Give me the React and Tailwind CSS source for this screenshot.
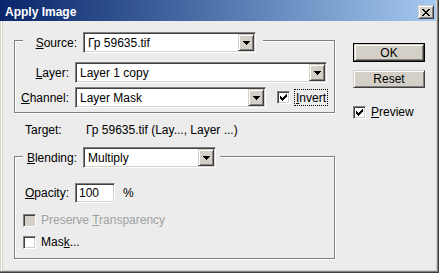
import React from "react";

function Px({ w, h, rects, color = "#000" }) {
  return (
    <svg width={w} height={h} viewBox={`0 0 ${w} ${h}`} shapeRendering="crispEdges">
      {rects.map(([x, y, rw], i) => (
        <rect key={i} x={x} y={y} width={rw} height={1} fill={color} />
      ))}
    </svg>
  );
}

const ARROW = [[0, 0, 7], [1, 1, 5], [2, 2, 3], [3, 3, 1]];
const CHECK = [[6, 0, 1], [5, 1, 2], [0, 2, 1], [4, 2, 3], [0, 3, 2], [3, 3, 3], [0, 4, 5], [1, 5, 3], [2, 6, 1]];
const XMARK = [[0, 0, 2], [6, 0, 2], [1, 1, 2], [5, 1, 2], [2, 2, 4], [3, 3, 2], [2, 4, 4], [1, 5, 2], [5, 5, 2], [0, 6, 2], [6, 6, 2]];

function Raised({ className = "", children }) {
  return (
    <div className={"flex items-center justify-center bg-[#d4d0c8] border border-t-[#d4d0c8] border-l-[#d4d0c8] border-r-[#404040] border-b-[#404040] shadow-[inset_1px_1px_0_#fff,inset_-1px_-1px_0_#808080] " + className}>
      {children}
    </div>
  );
}

function Dropdown({ width, value }) {
  return (
    <div
      className="flex h-[21px] p-[1px] bg-white border border-t-[#808080] border-l-[#808080] border-r-white border-b-white shadow-[inset_1px_1px_0_#404040,inset_-1px_-1px_0_#d4d0c8]"
      style={{ width }}
    >
      <div className="flex-1 flex items-center pl-[3px] whitespace-nowrap overflow-hidden">{value}</div>
      <Raised className="w-[16px] h-full">
        <Px w={7} h={4} rects={ARROW} />
      </Raised>
    </div>
  );
}

function Check({ checked, disabled }) {
  return (
    <span
      className={
        "flex shrink-0 w-[13px] h-[13px] items-center justify-center border border-t-[#808080] border-l-[#808080] border-r-white border-b-white shadow-[inset_1px_1px_0_#404040,inset_-1px_-1px_0_#d4d0c8] " +
        (disabled ? "bg-[#d4d0c8]" : "bg-white")
      }
    >
      {checked && <Px w={7} h={7} rects={CHECK} />}
    </span>
  );
}

export default function App() {
  return (
    <div className="w-[439px] h-[273px] overflow-hidden bg-[#d4d0c8] flex flex-col font-['Liberation_Sans',Arial,sans-serif] text-[12px] leading-[14px] text-black shadow-[inset_-1px_-1px_0_#404040,inset_-2px_-2px_0_#808080,inset_1px_0_0_#d4d0c8,inset_2px_0_0_#fff]">
      {/* Title bar */}
      <div className="w-[436px] h-[21px] shrink-0 flex items-start bg-linear-to-r from-[#0a246a] to-[#a6caf0] pl-[5px] pr-[2px]">
        <span className="flex-1 mt-[5px] text-white font-bold">Apply Image</span>
        <Raised className="mt-[5px] w-[16px] h-[14px]">
          <Px w={8} h={7} rects={XMARK} />
        </Raised>
      </div>

      {/* Body */}
      <div className="ml-[3px] w-[433px] h-[249px] bg-[#ececec] flex">
        {/* Left column */}
        <div className="w-[333px] pl-[11px] pt-[19px] flex flex-col">
          {/* Group 1 */}
          <div className="w-[321px] flex flex-col border border-[#808080] shadow-[1px_1px_0_#fff,inset_1px_1px_0_#fff] pb-[4px]">
            <div className="-mt-[9px] ml-[8px] w-fit flex items-center bg-[#ececec] pr-[7px]">
              <span className="w-[54px] text-right"><u>S</u>ource:</span>
              <div className="ml-[6px]"><Dropdown width={173} value="Гр 59635.tif" /></div>
            </div>
            <div className="mt-[9px] flex items-center">
              <span className="w-[54px] text-right"><u>L</u>ayer:</span>
              <div className="ml-[6px]"><Dropdown width={252} value="Layer 1 copy" /></div>
            </div>
            <div className="mt-[4px] flex items-center">
              <span className="w-[54px] text-right"><u>C</u>hannel:</span>
              <div className="ml-[6px]"><Dropdown width={191} value="Layer Mask" /></div>
              <div className="ml-[11px]"><Check checked /></div>
              <span className="ml-[4px] h-[17px] px-[1px] flex items-center border border-dotted border-black"><u>I</u>nvert</span>
            </div>
          </div>

          {/* Target */}
          <div className="mt-[10px] ml-[11px] flex whitespace-nowrap">
            <span className="w-[61px]">Target:</span>
            <span>Гр 59635.tif (Lay..., Layer ...)</span>
          </div>

          {/* Group 2 */}
          <div className="mt-[19px] w-[321px] flex flex-col border border-[#808080] shadow-[1px_1px_0_#fff,inset_1px_1px_0_#fff] pb-[9px]">
            <div className="-mt-[10px] ml-[8px] w-fit flex items-center bg-[#ececec] pr-[4px]">
              <span className="w-[54px] text-right"><u>B</u>lending:</span>
              <div className="ml-[6px]"><Dropdown width={133} value="Multiply" /></div>
            </div>
            <div className="mt-[15px] flex items-center">
              <span className="w-[54px] text-right"><u>O</u>pacity:</span>
              <div className="ml-[6px] w-[40px] h-[20px] p-[1px] flex items-center bg-white border border-t-[#808080] border-l-[#808080] border-r-white border-b-white shadow-[inset_1px_1px_0_#404040,inset_-1px_-1px_0_#d4d0c8]">
                <span className="pl-[2px]">100</span>
              </div>
              <span className="ml-[8px]">%</span>
            </div>
            <div className="mt-[10px] ml-[8px] flex items-center">
              <Check disabled />
              <span className="ml-[5px] text-[#a0a0a0]">Preserve <u>T</u>ransparency</span>
            </div>
            <div className="mt-[8px] ml-[8px] flex items-center">
              <Check />
              <span className="ml-[5px]">Mas<u>k</u>...</span>
            </div>
          </div>
        </div>

        {/* Right column */}
        <div className="pl-[17px] pt-[22px] flex flex-col">
          <div className="w-[72px] h-[19px] border border-black flex">
            <Raised className="flex-1">OK</Raised>
          </div>
          <Raised className="mt-[8px] w-[72px] h-[18px]">Reset</Raised>
          <div className="mt-[17px] flex items-center">
            <Check checked />
            <span className="ml-[5px]"><u>P</u>review</span>
          </div>
        </div>
      </div>
    </div>
  );
}
